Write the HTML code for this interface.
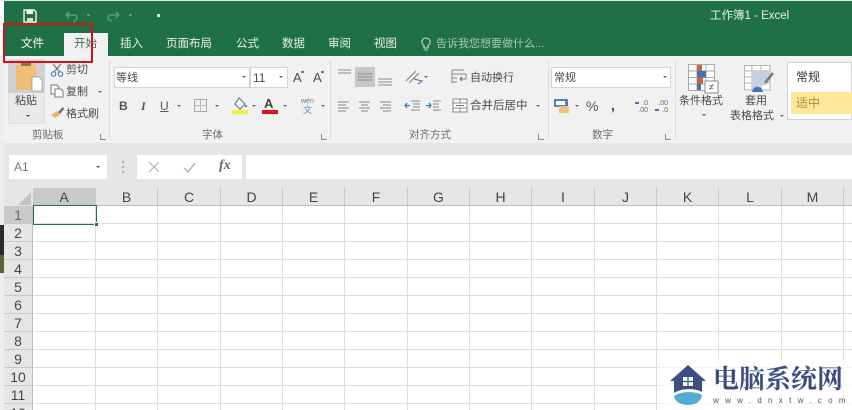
<!DOCTYPE html>
<html lang="zh">
<head>
<meta charset="utf-8">
<title>工作簿1 - Excel</title>
<style>
html,body{margin:0;padding:0;background:#fff}
#p{position:relative;width:852px;height:410px;overflow:hidden;background:#fff;font-family:"Liberation Sans","Noto Sans CJK SC",sans-serif;color:#444;filter:blur(.35px)}
#p div,#p span.a{position:absolute;white-space:nowrap}
.t{font-size:11.5px;line-height:14px;color:#4a4a4a}
.tab{font-size:11.5px;line-height:14px;color:#e6f0ea;top:37px}
.gl{font-size:10.5px;line-height:14px;color:#6a6a6a;top:128px}
.sep{width:1px;background:#dcdcdc;top:60px;height:80px}
.box{background:#fff;border:1px solid #d4d4d4;box-sizing:border-box}
.car{width:0;height:0;border-left:2px solid transparent;border-right:2px solid transparent;border-top:2px solid #666}
.ch{top:188px;height:18px;font-size:14px;line-height:19px;text-align:center;color:#444;background:#e6e6e6;border-right:1px solid #c8c8c8;box-sizing:border-box;border-bottom:1px solid #bdbdbd}
.rh{left:4px;width:29px;height:18px;font-size:14px;line-height:18px;text-align:center;color:#444;background:#e6e6e6;border-bottom:1px solid #c8c8c8;box-sizing:border-box;border-right:1px solid #bdbdbd}
.v{top:206px;bottom:0;width:1px;background:#dedede}
.h{left:33px;right:0;height:1px;background:#dedede}
.dl{width:5px;height:5px;border-left:1px solid #888;border-bottom:1px solid #888;top:134px}
svg{position:absolute;overflow:visible}
</style>
</head>
<body>
<div id="p">
<!-- title bar -->
<div style="left:4px;top:1px;width:848px;height:55px;background:#1f7145"></div>
<div style="left:0;top:0;width:852px;height:1px;background:#dfe8e3"></div>
<svg style="left:23px;top:9px" width="14" height="14" viewBox="0 0 14 14"><path d="M1 1H11L13 3V13H1Z" fill="none" stroke="#f1f6f3" stroke-width="1.4"/><path d="M3.500 1.500H10V5H3.500Z" fill="#f1f6f3"/><path d="M4 9H10V13H4Z" fill="#cfe0d6"/></svg>
<svg style="left:64px;top:10px" width="16" height="12" viewBox="0 0 16 12"><path d="M2 5H10C14 5 14 11 9 11M2 5L5 2M2 5L5 8" fill="none" stroke="#5f9a7b" stroke-width="1.6"/></svg>
<svg style="left:105px;top:10px" width="16" height="12" viewBox="0 0 16 12"><path d="M14 5H6C2 5 2 11 7 11M14 5L11 2M14 5L11 8" fill="none" stroke="#5f9a7b" stroke-width="1.6"/></svg>
<div style="left:87px;top:14px;width:3px;height:2px;background:#5f9a7b"></div>
<div style="left:129px;top:14px;width:3px;height:2px;background:#5f9a7b"></div>
<div style="left:157px;top:14px;width:3px;height:3px;background:#dfe9e3"></div>
<div style="left:710px;top:9px;font-size:11.5px;line-height:15px;color:#e8f0ec">工作簿1 - Excel</div>
<!-- tabs -->
<div class="tab" style="left:21px;color:#fff">文件</div>
<div style="left:64px;top:33px;width:44px;height:23px;background:#f1f1f1"></div>
<div class="tab" style="left:74px;color:#3d6f52">开始</div>
<div class="tab" style="left:120px">插入</div>
<div class="tab" style="left:166px">页面布局</div>
<div class="tab" style="left:236px">公式</div>
<div class="tab" style="left:282px">数据</div>
<div class="tab" style="left:328px">审阅</div>
<div class="tab" style="left:374px">视图</div>
<svg style="left:421px;top:37px" width="10" height="15" viewBox="0 0 10 15"><path d="M5 1A4 4 0 0 1 7 8.500V11H3V8.500A4 4 0 0 1 5 1ZM3.500 13H6.500" fill="none" stroke="#cfe0d6" stroke-width="1.1"/></svg>
<div class="tab" style="left:436px;color:#a9c8b6;font-size:11px">告诉我您想要做什么...</div>
<!-- ribbon -->
<div style="left:4px;top:56px;width:848px;height:87px;background:#f1f1f1"></div>
<div style="left:0;top:143px;width:852px;height:7px;background:#e6e6e6"></div>
<div style="left:0;top:56px;width:4px;height:354px;background:#ededed"></div>
<div style="left:4px;top:150px;width:848px;height:56px;background:#e6e6e6"></div>
<!-- clipboard -->
<div style="left:8px;top:59px;width:37px;height:65px;background:#e9e9e9;border:1px solid #e0e0e0;box-sizing:border-box"></div>
<div style="left:8px;top:60px;width:37px;height:33px;background:#d0d0d0"></div>
<svg style="left:15px;top:60px" width="28" height="32" viewBox="0 0 28 32"><path d="M1 5H21V30H1Z" fill="#eebf74"/><path d="M6 3H16V6H6Z" fill="#8a7350"/><path d="M17 17H24L27 20V31H17Z" fill="#fff" stroke="#999" stroke-width=".8"/></svg>
<div class="t" style="left:15px;top:94px;font-size:11px">粘贴</div>
<div class="car" style="left:26px;top:115px;border-top-color:#444"></div>
<svg style="left:50px;top:63px" width="14" height="14" viewBox="0 0 14 14"><path d="M3 1L10 9M11 1L4 9" stroke="#777" stroke-width="1.2" fill="none"/><circle cx="3.500" cy="11" r="2.2" fill="none" stroke="#4f81bd" stroke-width="1.2"/><circle cx="10.500" cy="11" r="2.2" fill="none" stroke="#4f81bd" stroke-width="1.2"/></svg>
<div class="t" style="left:66px;top:63px;font-size:11px">剪切</div>
<svg style="left:50px;top:84px" width="14" height="14" viewBox="0 0 14 14"><path d="M1 1H7L9 3V10H1Z" fill="#f8f8f8" stroke="#777"/><path d="M5 5H11L13 7V13H5Z" fill="#fff" stroke="#777"/></svg>
<div class="t" style="left:66px;top:85px;font-size:11px">复制</div>
<div class="car" style="left:98px;top:91px"></div>
<svg style="left:50px;top:106px" width="15" height="13" viewBox="0 0 15 13"><path d="M1 9L7 5L10 9L5 12Z" fill="#e8b66c"/><path d="M8 6L13 1L14 3L10 8Z" fill="#6b6b6b"/></svg>
<div class="t" style="left:66px;top:107px;font-size:11px">格式刷</div>
<div class="gl" style="left:32px">剪贴板</div>
<div class="dl" style="left:100px"></div>
<div class="sep" style="left:109px"></div>
<!-- font -->
<div class="box" style="left:114px;top:67px;width:136px;height:21px"></div>
<div class="t" style="left:116px;top:71px;font-size:11px">等线</div>
<div class="car" style="left:242px;top:76px"></div>
<div class="box" style="left:250px;top:67px;width:38px;height:21px"></div>
<div class="t" style="left:253px;top:71px;font-size:12px">11</div>
<div class="car" style="left:279px;top:76px"></div>
<div class="t" style="left:293px;top:71px;font-size:13px">A</div>
<div class="t" style="left:313px;top:71px;font-size:13px">A</div>
<div style="left:301px;top:71px;width:3px;height:2px;background:#777"></div>
<div style="left:321px;top:71px;width:3px;height:2px;background:#777"></div>
<div style="left:119px;top:99px;font-size:12px;line-height:14px;font-weight:bold;color:#555">B</div>
<div style="left:141px;top:99px;font-size:12px;line-height:14px;font-style:italic;font-weight:bold;color:#555;font-family:'Liberation Serif',serif">I</div>
<div style="left:160px;top:99px;font-size:12px;line-height:14px;text-decoration:underline;color:#555">U</div>
<div class="car" style="left:177px;top:105px"></div>
<div style="left:194px;top:99px;width:13px;height:13px;border:1px solid #aaa;box-sizing:border-box;background:linear-gradient(#bbb,#bbb) 5px 0/1px 100% no-repeat,linear-gradient(#bbb,#bbb) 0 5px/100% 1px no-repeat"></div>
<div class="car" style="left:215px;top:105px"></div>
<svg style="left:232px;top:97px" width="16" height="13" viewBox="0 0 16 13"><path d="M7 1L13 7L8 12L3 7Z" fill="#fff" stroke="#5b7fb0" stroke-width="1.2"/><circle cx="14" cy="9" r="1.3" fill="#888"/></svg>
<div style="left:232px;top:110px;width:16px;height:4px;background:#f5ee3a"></div>
<div class="car" style="left:252px;top:105px"></div>
<div style="left:264px;top:96px;font-size:13px;line-height:15px;font-weight:bold;color:#444">A</div>
<div style="left:262px;top:110px;width:16px;height:4px;background:#e0101e"></div>
<div class="car" style="left:283px;top:105px"></div>
<div style="left:301px;top:98px;font-size:7px;line-height:8px;color:#777">wén</div>
<div style="left:303px;top:105px;font-size:9px;line-height:10px;color:#5a8ac0">文</div>
<div class="car" style="left:321px;top:105px"></div>
<div class="gl" style="left:202px">字体</div>
<div class="dl" style="left:321px"></div>
<div class="sep" style="left:330px"></div>
<!-- alignment -->
<svg style="left:336px;top:66px" width="60" height="22" viewBox="0 0 60 22"><rect x="19" y="1" width="20" height="20" fill="#c6c6c6"/><path d="M2 4H15M2 7H15M22 8H36M22 11H36M22 14H36M42 13H56M42 16H56M42 19H56" stroke="#8a8a8a" stroke-width="1"/></svg>
<svg style="left:404px;top:69px" width="20" height="16" viewBox="0 0 20 16"><path d="M2 12L12 2M5 14L15 4" stroke="#888" stroke-width="1.2"/><path d="M10 10L18 12L14 15" fill="none" stroke="#5b7fb0" stroke-width="1.2"/></svg>
<div class="car" style="left:424px;top:76px"></div>
<svg style="left:451px;top:69px" width="18" height="16" viewBox="0 0 18 16"><path d="M1 1H13M1 5H15V10H9M1 9H6M1 13H6" fill="none" stroke="#888" stroke-width="1"/><path d="M1 1V14" stroke="#888"/><path d="M9 10L11 8M9 10L11 12" stroke="#3f76b5" stroke-width="1.2"/></svg>
<div class="t" style="left:470px;top:71px;font-size:11px">自动换行</div>
<svg style="left:337px;top:100px" width="60" height="12" viewBox="0 0 60 12"><path d="M1 2H12M1 5H9M1 8H12M1 11H9M22 2H33M24 5H31M22 8H33M24 11H31M43 2H54M46 5H54M43 8H54M46 11H54" stroke="#888" stroke-width="1"/></svg>
<svg style="left:404px;top:99px" width="38" height="14" viewBox="0 0 38 14"><path d="M7 2H16M9 5H16M9 8H16M7 11H16M29 2H37M29 5H35M29 8H35M29 11H37" stroke="#888" stroke-width="1"/><path d="M1 6.500H6M3 4L1 6.500L3 9M22 6.500H27M25 4L27 6.500L25 9" fill="none" stroke="#3f76b5" stroke-width="1.300"/></svg>
<svg style="left:452px;top:98px" width="16" height="15" viewBox="0 0 16 15"><path d="M1 1H15V14H1ZM1 5H15M1 10H15M8 1V5M8 10V14" fill="#fff" stroke="#888"/><path d="M4 7.500H12" stroke="#3f76b5"/></svg>
<div class="t" style="left:470px;top:99px;font-size:11.5px">合并后居中</div>
<div class="car" style="left:536px;top:105px"></div>
<div class="gl" style="left:409px">对齐方式</div>
<div class="dl" style="left:538px"></div>
<div class="sep" style="left:548px"></div>
<!-- number -->
<div class="box" style="left:551px;top:67px;width:120px;height:21px"></div>
<div class="t" style="left:554px;top:71px;font-size:11px">常规</div>
<div class="car" style="left:663px;top:76px"></div>
<svg style="left:554px;top:98px" width="16" height="16" viewBox="0 0 16 16"><rect x="0" y="1" width="14" height="8" fill="#4f81bd"/><rect x="2" y="3" width="9" height="4" fill="#fff"/><rect x="5" y="8" width="10" height="7" fill="#ecc27c"/></svg>
<div class="car" style="left:575px;top:105px"></div>
<div style="left:586px;top:98px;font-size:14px;line-height:16px;color:#555">%</div>
<div style="left:611px;top:97px;font-size:14px;line-height:16px;color:#444;font-weight:bold">,</div>
<div style="left:632px;top:100px;font-size:7px;line-height:7px;color:#666;text-align:right;width:16px">.0<br>.00</div>
<div style="left:654px;top:100px;font-size:7px;line-height:7px;color:#666;text-align:right;width:14px">.00<br>.0</div>
<div style="left:635px;top:102px;width:4px;height:2px;background:#3f76b5"></div>
<div style="left:655px;top:109px;width:4px;height:2px;background:#3f76b5"></div>
<div class="gl" style="left:592px">数字</div>
<div class="dl" style="left:665px"></div>
<div class="sep" style="left:675px"></div>
<!-- styles -->
<svg style="left:688px;top:64px" width="32" height="30" viewBox="0 0 32 30"><path d="M.5 .5H26.500V26.500H.5ZM.5 7H26.500M.5 13.500H26.500M.5 20H26.500M9 .5V26.500M18 .5V26.500" fill="#fff" stroke="#aaa"/><rect x="9" y="1" width="5" height="6" fill="#d2603a"/><rect x="9" y="7" width="9" height="6.500" fill="#3f76b5"/><rect x="9" y="13.500" width="6" height="6.500" fill="#d2603a"/><rect x="9" y="20" width="4" height="6" fill="#3f76b5"/><rect x="17" y="17" width="13" height="12" fill="#fff" stroke="#888"/></svg>
<div style="left:709px;top:82px;font-size:9px;line-height:10px;color:#444">≠</div>
<div class="t" style="left:679px;top:94px;font-size:11px">条件格式</div>
<div class="car" style="left:702px;top:114px"></div>
<svg style="left:744px;top:65px" width="30" height="28" viewBox="0 0 30 28"><path d="M.5 .5H26V25H.5ZM.5 6H26M.5 12H26M.5 18H26M8 .5V25M17 .5V25" fill="#fff" stroke="#b5b5b5"/><path d="M8 6H26V18L8 25Z" fill="#c5cfe0"/><path d="M8 27C9 20 18 20 19 27Z" fill="#3f76b5"/><path d="M21 18L29 8" stroke="#777" stroke-width="2.500"/></svg>
<div class="t" style="left:745px;top:94px;font-size:11px">套用</div>
<div class="t" style="left:730px;top:109px;font-size:11px">表格格式</div>
<div class="car" style="left:780px;top:115px"></div>
<div style="left:787px;top:62px;width:65px;height:58px;background:#fff;border:1px solid #d0d0d0;box-sizing:border-box"></div>
<div class="t" style="left:796px;top:70px;font-size:12px;color:#333">常规</div>
<div style="left:791px;top:92px;width:61px;height:22px;background:#ffe79c"></div>
<div class="t" style="left:796px;top:96px;font-size:12px;color:#b98a2e">适中</div>
<!-- formula bar -->
<div style="left:9px;top:155px;width:98px;height:24px;background:#fff"></div>
<div class="t" style="left:14px;top:160px;font-size:12px;color:#777">A1</div>
<div class="car" style="left:96px;top:166px;border-top-color:#555"></div>
<div style="left:122px;top:161px;width:2px;height:2px;background:#aaa"></div>
<div style="left:122px;top:166px;width:2px;height:2px;background:#aaa"></div>
<div style="left:122px;top:171px;width:2px;height:2px;background:#aaa"></div>
<div style="left:137px;top:155px;width:105px;height:24px;background:#fff"></div>
<svg style="left:148px;top:161px" width="12" height="12" viewBox="0 0 12 12"><path d="M1 1L11 11M11 1L1 11" stroke="#b5b5b5" stroke-width="1.200"/></svg>
<svg style="left:183px;top:161px" width="13" height="12" viewBox="0 0 13 12"><path d="M1 7L5 11L12 2" fill="none" stroke="#b5b5b5" stroke-width="1.500"/></svg>
<div style="left:219px;top:158px;font-size:14px;line-height:16px;font-style:italic;font-weight:bold;color:#666;font-family:'Liberation Serif',serif">fx</div>
<div style="left:246px;top:155px;width:606px;height:24px;background:#fff"></div>
<!-- col headers -->
<svg style="left:18px;top:192px" width="14" height="13" viewBox="0 0 14 13"><path d="M13 0V13H0Z" fill="#c2c2c2"/></svg>
<div class="ch" style="left:33px;width:63px;background:#c9c9c9;border-bottom:1px solid #9a9a9a">A</div>
<div class="ch" style="left:96px;width:62px">B</div>
<div class="ch" style="left:158px;width:63px">C</div>
<div class="ch" style="left:221px;width:62px">D</div>
<div class="ch" style="left:283px;width:62px">E</div>
<div class="ch" style="left:345px;width:63px">F</div>
<div class="ch" style="left:408px;width:62px">G</div>
<div class="ch" style="left:470px;width:62px">H</div>
<div class="ch" style="left:532px;width:63px">I</div>
<div class="ch" style="left:595px;width:62px">J</div>
<div class="ch" style="left:657px;width:62px">K</div>
<div class="ch" style="left:719px;width:63px">L</div>
<div class="ch" style="left:782px;width:62px">M</div>
<div class="ch" style="left:844px;width:8px;border-right:0"></div>
<!-- row headers -->
<div class="rh" style="top:206px;background:#c9c9c9;color:#666">1</div>
<div class="rh" style="top:224px">2</div>
<div class="rh" style="top:242px">3</div>
<div class="rh" style="top:260px">4</div>
<div class="rh" style="top:278px">5</div>
<div class="rh" style="top:296px">6</div>
<div class="rh" style="top:314px">7</div>
<div class="rh" style="top:332px">8</div>
<div class="rh" style="top:350px">9</div>
<div class="rh" style="top:368px">10</div>
<div class="rh" style="top:386px">11</div>
<div class="rh" style="top:404px">12</div>
<!-- side photo strip -->
<div style="left:0;top:225px;width:4px;height:48px;background:#2a2a26"></div>
<div style="left:0;top:255px;width:4px;height:18px;background:#5c5f38"></div>
<!-- grid -->
<div class="v" style="left:95px"></div><div class="v" style="left:157px"></div><div class="v" style="left:220px"></div><div class="v" style="left:282px"></div><div class="v" style="left:344px"></div><div class="v" style="left:407px"></div><div class="v" style="left:469px"></div><div class="v" style="left:531px"></div><div class="v" style="left:594px"></div><div class="v" style="left:656px"></div><div class="v" style="left:718px"></div><div class="v" style="left:781px"></div><div class="v" style="left:843px"></div>
<div class="h" style="top:223px"></div><div class="h" style="top:241px"></div><div class="h" style="top:259px"></div><div class="h" style="top:277px"></div><div class="h" style="top:295px"></div><div class="h" style="top:313px"></div><div class="h" style="top:331px"></div><div class="h" style="top:349px"></div><div class="h" style="top:367px"></div><div class="h" style="top:385px"></div><div class="h" style="top:403px"></div>
<!-- selected cell -->
<div style="left:33px;top:205px;width:64px;height:20px;border:1.500px solid #217346;box-sizing:border-box"></div>
<div style="left:94px;top:222px;width:3px;height:3px;background:#217346;border:1px solid #fff"></div>
<!-- watermark -->
<div style="left:660px;top:360px;width:192px;height:50px;background:rgba(255,255,255,.7)"></div>
<svg style="left:669px;top:364px" width="38" height="42" viewBox="0 0 38 42"><path d="M19 1L37 17H33V28C26 24 12 24 5 29V17H1Z" fill="#3f4e82"/><path d="M5 32C12 27 26 27 33 31C32 38 26 41 19 41C12 41 6 38 5 32Z" fill="#55a9d6"/><path d="M14 13H24V22H14Z" fill="#fff"/><path d="M19 13V22M14 17.500H24" stroke="#3f4e82" stroke-width="1.200"/></svg>
<div style="left:713px;top:365px;font-size:26px;line-height:30px;font-weight:bold;color:#3b4d7f;font-family:'Liberation Serif','Noto Serif CJK SC',serif">电脑系统网</div>
<div style="left:713px;top:396px;font-size:8px;line-height:10px;color:#555;letter-spacing:6.300px">www.dnxtw.com</div>
<!-- red highlight -->
<div style="left:3px;top:23px;width:90px;height:40px;border:2px solid #d0121b;box-sizing:border-box"></div>
</div>
</body>
</html>
